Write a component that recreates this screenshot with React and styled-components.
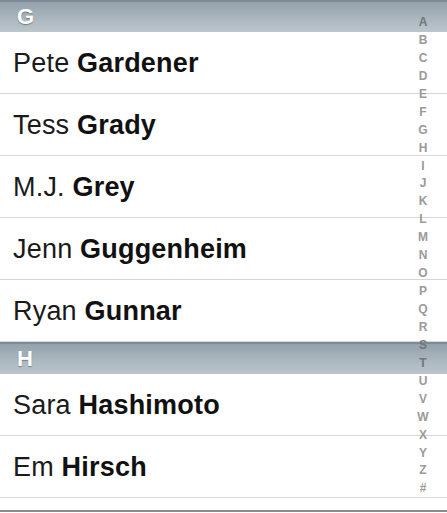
import React from 'react';
import styled, { createGlobalStyle } from 'styled-components';

const sections = [
  {
    letter: 'G',
    people: [
      ['Pete', 'Gardener'],
      ['Tess', 'Grady'],
      ['M.J.', 'Grey'],
      ['Jenn', 'Guggenheim'],
      ['Ryan', 'Gunnar'],
    ],
  },
  {
    letter: 'H',
    people: [
      ['Sara', 'Hashimoto'],
      ['Em', 'Hirsch'],
    ],
  },
];

const index = 'ABCDEFGHIJKLMNOPQRSTUVWXYZ#'.split('');

const Global = createGlobalStyle`
  body {
    margin: 0;
    background: #ffffff;
    font-family: 'Liberation Sans', Arial, sans-serif;
  }
`;

const Screen = styled.div`
  position: relative;
  width: 447px;
  height: 513px;
  overflow: hidden;
  background: #fff;
`;

const List = styled.div`
  display: flex;
  flex-direction: column;
`;

const Header = styled.div`
  height: 30px;
  display: flex;
  align-items: center;
  padding-left: 17px;
  border-top: 2px solid #7d8b96;
  background: linear-gradient(to bottom, #93a1ac 0%, #a9b5bd 50%, #bcc5cc 100%);
  color: #fff;
  font-size: 22px;
  font-weight: bold;
  text-shadow: 0 1px 1px rgba(60, 70, 80, 0.55);
`;

const Row = styled.div`
  box-sizing: border-box;
  height: 62px;
  display: flex;
  align-items: center;
  padding-left: 13px;
  padding-top: 1px;
  border-bottom: 1px solid #d6d6d6;
  font-size: 27px;
  letter-spacing: 0.2px;
  color: #1a1a1a;
  white-space: pre;
`;

const Last = styled.b`
  font-weight: bold;
  color: #111;
`;

const Footer = styled.div`
  margin-top: 12px;
  height: 2px;
  background: #8c8c8c;
`;

const Index = styled.div`
  position: absolute;
  z-index: 1;
  top: 14px;
  right: 12px;
  width: 24px;
  display: flex;
  flex-direction: column;
  align-items: center;
`;

const IndexLetter = styled.span`
  height: 17.95px;
  line-height: 17.95px;
  font-size: 12px;
  font-weight: bold;
  color: ${(p) => (p.$dark ? '#6f767c' : '#9a9a9a')};
`;

export default function App() {
  return (
    <Screen>
      <Global />
      <List>
        {sections.map((s) => (
          <React.Fragment key={s.letter}>
            <Header>{s.letter}</Header>
            {s.people.map(([first, last]) => (
              <Row key={last}>
                {first + ' '}
                <Last>{last}</Last>
              </Row>
            ))}
          </React.Fragment>
        ))}
        <Footer />
      </List>
      <Index>
        {index.map((l) => (
          <IndexLetter key={l} $dark={l === 'A' || l === 'S' || l === 'T'}>
            {l}
          </IndexLetter>
        ))}
      </Index>
    </Screen>
  );
}
